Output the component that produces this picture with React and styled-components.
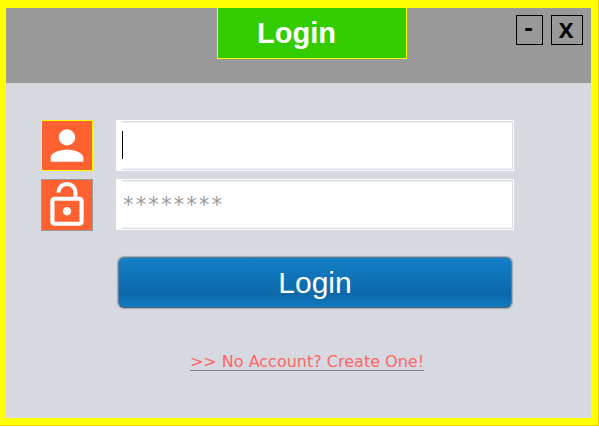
import React from "react";
import styled, { createGlobalStyle } from "styled-components";

const GlobalStyle = createGlobalStyle`
  *, *::before, *::after { box-sizing: border-box; }
  body { margin: 0; background: #ffffff; font-family: "Liberation Sans", Arial, sans-serif; }
`;

const Frame = styled.div`
  display: flex;
  min-height: calc(100vh - 1px);
  padding: 8px 7px 7px 6px;
  background: #ffff00;
  border-right: 1px solid #ffcc00;
  border-bottom: 1px solid #ffcc00;
`;

const Panel = styled.main`
  flex: 1;
  min-width: 0;
  display: flex;
  flex-direction: column;
  background: #d6d9e0;
`;

const Header = styled.header`
  display: grid;
  grid-template-columns: 211fr 190px 184fr;
  align-items: start;
  height: 75px;
  background: #999999;
`;

const TitleTab = styled.h1`
  grid-column: 2;
  margin: 0;
  height: 51px;
  padding-left: 39px;
  border: 1px solid #ffff00;
  border-top: none;
  background: #33cc00;
  color: #ffffff;
  font-size: 29px;
  font-weight: bold;
  line-height: 50px;
`;

const WindowControls = styled.div`
  display: flex;
  justify-content: flex-end;
  gap: 8px;
  padding: 7px 8px 0 0;
`;

const WindowButton = styled.button`
  display: flex;
  align-items: center;
  justify-content: center;
  width: ${(p) => (p.$wide ? 32 : 27)}px;
  height: 30px;
  padding: ${(p) => (p.$wide ? "0 2px 2px 0" : "0 2px 3px 0")};
  border: 1px solid #000000;
  background: transparent;
  color: #000000;
  font: bold 22px/26px ${(p) => (p.$wide ? '"Noto Sans"' : '"DejaVu Sans"')}, sans-serif;
`;

const Form = styled.form`
  display: grid;
  grid-template-columns: 52px 1fr;
  column-gap: 23px;
  row-gap: 8px;
  padding: 37px 77px 0 35px;
`;

const IconLabel = styled.label`
  display: block;
  height: ${(p) => (p.$active ? 51 : 52)}px;
  border: 1px solid ${(p) => (p.$active ? "#ffff00" : "#999999")};
  background: #ff6131;

  svg { display: block; width: 100%; height: 100%; fill: #ffffff; }
`;

const Field = styled.div`
  position: relative;
  height: 51px;
  padding: 1px 1px 1px 6px;
  background: #ffffff;
`;

const Input = styled.input`
  display: block;
  width: 100%;
  height: 100%;
  padding: 0;
  border: 1px solid #d9dce2;
  border-left: none;
  border-radius: 0;
  outline: none;
  background: #ffffff;
  box-shadow: inset 0 1px 0 #eceef1, inset 0 -1px 0 #f1f2f4;
  color: #333333;
  font: 21px "DejaVu Sans Mono", monospace;

  &::placeholder { color: #999999; opacity: 1; }
`;

const Caret = styled.span`
  position: absolute;
  left: 6px;
  top: 11px;
  width: 1px;
  height: 28px;
  background: #000000;
`;

const Actions = styled.div`
  grid-column: 2;
  display: flex;
  flex-direction: column;
  padding: 18px 2px 0;
`;

const SubmitButton = styled.button`
  height: 51px;
  padding: 1px 0 0;
  border: 1px solid #5b7f9b;
  border-bottom-color: #46627a;
  border-radius: 6px;
  background: linear-gradient(#147fc8, #0c69aa 74%, #107ac2);
  box-shadow: 0 0 1px 1px #a3a8ae;
  color: #ffffff;
  font: 30px/48px "Liberation Sans", Arial, sans-serif;
`;

const AccountLink = styled.a`
  align-self: center;
  margin: 46px 16px 0 0;
  border-bottom: 1px solid #808080;
  color: #ff6666;
  font: 16px/16px "DejaVu Sans", Verdana, sans-serif;
  text-decoration: none;
  white-space: nowrap;
`;

const PersonIcon = () => (
  <svg viewBox="0 0 24 24" aria-hidden="true">
    <path d="M12 12c2.21 0 4-1.79 4-4s-1.79-4-4-4-4 1.79-4 4 1.79 4 4 4zm0 2c-2.67 0-8 1.34-8 4v2h16v-2c0-2.66-5.33-4-8-4z" />
  </svg>
);

const OpenLockIcon = () => (
  <svg viewBox="0 0 24 24" aria-hidden="true">
    <path d="M12 17c1.1 0 2-.9 2-2s-.9-2-2-2-2 .9-2 2 .9 2 2 2zm6-9h-1V6c0-2.76-2.24-5-5-5S7 3.24 7 6h1.9c0-1.71 1.39-3.1 3.1-3.1 1.71 0 3.1 1.39 3.1 3.1v2H6c-1.1 0-2 .9-2 2v10c0 1.1.9 2 2 2h12c1.1 0 2-.9 2-2V10c0-1.1-.9-2-2-2zm0 12H6V10h12v10z" />
  </svg>
);

export default function App() {
  return (
    <>
      <GlobalStyle />
      <Frame>
        <Panel>
          <Header>
            <TitleTab>Login</TitleTab>
            <WindowControls>
              <WindowButton type="button" aria-label="Minimize">-</WindowButton>
              <WindowButton type="button" aria-label="Close" $wide>X</WindowButton>
            </WindowControls>
          </Header>
          <Form onSubmit={(e) => e.preventDefault()}>
            <IconLabel htmlFor="username" aria-label="Username" $active>
              <PersonIcon />
            </IconLabel>
            <Field>
              <Input id="username" type="text" aria-label="Username" autoComplete="username" />
              <Caret />
            </Field>
            <IconLabel htmlFor="password" aria-label="Password">
              <OpenLockIcon />
            </IconLabel>
            <Field>
              <Input
                id="password"
                type="password"
                aria-label="Password"
                placeholder="********"
                autoComplete="current-password"
              />
            </Field>
            <Actions>
              <SubmitButton type="submit">Login</SubmitButton>
              <AccountLink href="#register">&gt;&gt; No Account? Create One!</AccountLink>
            </Actions>
          </Form>
        </Panel>
      </Frame>
    </>
  );
}
